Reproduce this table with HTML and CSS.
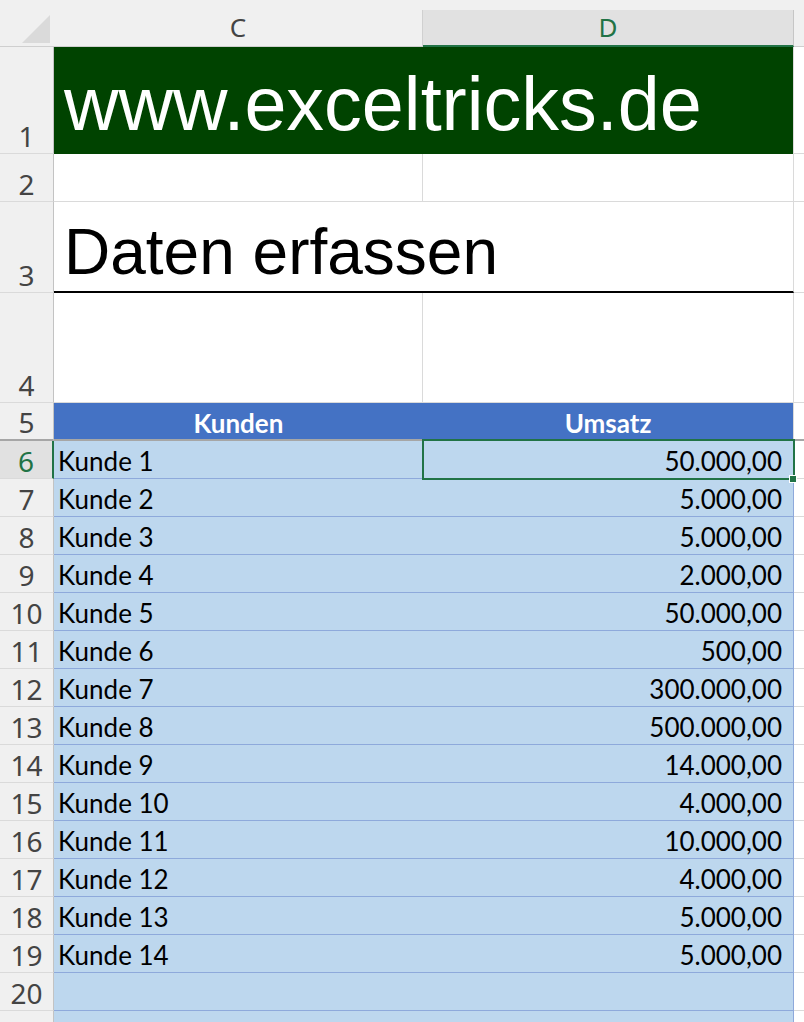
FILE: index.html
```html
<!DOCTYPE html>
<html lang="de">
<head>
<meta charset="utf-8">
<title>exceltricks</title>
<link rel="stylesheet" href="styles.css">
</head>
<body>
<div class="sheet">
  <!-- column headers -->
  <div class="ch corner"><svg class="tri" width="30" height="30" viewBox="0 0 30 30"><polygon points="1,29 29,29 29,1" fill="#dadada"/></svg></div>
  <div class="ch">C</div>
  <div class="ch sel">D</div>
  <div class="ch last"></div>

  <!-- row 1 -->
  <div class="rh">1</div>
  <div class="banner">www.exceltricks.de</div>
  <div class="e"></div>

  <!-- row 2 -->
  <div class="rh">2</div>
  <div class="w"></div>
  <div class="w"></div>
  <div class="e"></div>

  <!-- row 3 -->
  <div class="rh">3</div>
  <div class="title">Daten erfassen</div>
  <div class="e"></div>

  <!-- row 4 -->
  <div class="rh">4</div>
  <div class="w"></div>
  <div class="w"></div>
  <div class="e"></div>

  <!-- row 5 -->
  <div class="rh frz">5</div>
  <div class="th frz">Kunden</div>
  <div class="th thd frz">Umsatz</div>
  <div class="e frz"></div>

  <div class="rh rsel">6</div><div class="c">Kunde 1</div><div class="d active">50.000,00</div><div class="e"></div>
  <div class="rh">7</div><div class="c">Kunde 2</div><div class="d">5.000,00</div><div class="e"></div>
  <div class="rh">8</div><div class="c">Kunde 3</div><div class="d">5.000,00</div><div class="e"></div>
  <div class="rh">9</div><div class="c">Kunde 4</div><div class="d">2.000,00</div><div class="e"></div>
  <div class="rh">10</div><div class="c">Kunde 5</div><div class="d">50.000,00</div><div class="e"></div>
  <div class="rh">11</div><div class="c">Kunde 6</div><div class="d">500,00</div><div class="e"></div>
  <div class="rh">12</div><div class="c">Kunde 7</div><div class="d">300.000,00</div><div class="e"></div>
  <div class="rh">13</div><div class="c">Kunde 8</div><div class="d">500.000,00</div><div class="e"></div>
  <div class="rh">14</div><div class="c">Kunde 9</div><div class="d">14.000,00</div><div class="e"></div>
  <div class="rh">15</div><div class="c">Kunde 10</div><div class="d">4.000,00</div><div class="e"></div>
  <div class="rh">16</div><div class="c">Kunde 11</div><div class="d">10.000,00</div><div class="e"></div>
  <div class="rh">17</div><div class="c">Kunde 12</div><div class="d">4.000,00</div><div class="e"></div>
  <div class="rh">18</div><div class="c">Kunde 13</div><div class="d">5.000,00</div><div class="e"></div>
  <div class="rh">19</div><div class="c">Kunde 14</div><div class="d">5.000,00</div><div class="e"></div>
  <div class="rh">20</div><div class="c"></div><div class="d"></div><div class="e"></div>
  <div class="rh">21</div><div class="c"></div><div class="d"></div><div class="e"></div>
</div>
</body>
</html>
```

FILE: styles.css
```css
html, body {
  margin: 0;
  padding: 0;
  width: 804px;
  height: 1022px;
  overflow: hidden;
  background: #ffffff;
}

.sheet {
  display: grid;
  grid-template-columns: 54px 369px 371px 10px;
  grid-template-rows: 47px 107px 48px 91px 110px 38px repeat(16, 38px);
  background: #f0f0f0;
}

.sheet > div {
  box-sizing: border-box;
  min-width: 0;
  overflow: visible;
  white-space: nowrap;
}

/* column header */
.ch {
  margin-top: 10px;
  background: #f0f0f0;
  border-right: 1px solid #d0d0d0;
  border-bottom: 1px solid #cfcfcf;
  display: flex;
  align-items: center;
  justify-content: center;
  font-family: "Noto Sans", "Open Sans", sans-serif;
  font-size: 26px;
  line-height: 26px;
  color: #444444;
  padding-bottom: 2px;
}
.corner {
  margin-top: 0;
  border-right: none;
  justify-content: flex-end;
  align-items: flex-end;
  padding: 0 3px 2px 0;
}
.tri { display: block; }
.ch.sel {
  background: #e1e1e1;
  color: #217346;
  border-bottom: 2px solid #217346;
  border-right-color: #c6c6c6;
}
.ch.last { border-right: none; }

/* row header */
.rh {
  background: #f0f0f0;
  border-right: 1px solid #c3c3c3;
  border-bottom: 1px solid #dadada;
  display: flex;
  align-items: flex-end;
  justify-content: center;
  font-family: "Noto Sans", "Open Sans", sans-serif;
  font-size: 28px;
  line-height: 28px;
  color: #444444;
  padding-bottom: 3px;
}
.rh.rsel {
  background: #e1e1e1;
  color: #217346;
  border-right: 2px solid #217346;
}

/* plain cells */
.w {
  background: #ffffff;
  border-right: 1px solid #dadada;
  border-bottom: 1px solid #dadada;
}
.e {
  background: #ffffff;
  border-bottom: 1px solid #dadada;
}

.banner {
  grid-column: span 2;
  background: #004300;
  color: #ffffff;
  font-family: "Liberation Sans", Arial, sans-serif;
  font-size: 75.5px;
  line-height: 75px;
  display: flex;
  align-items: flex-end;
  padding: 0 0 12px 10px;
  border-right: 1px solid #dadada;
}

.title {
  grid-column: span 2;
  background: #ffffff;
  color: #000000;
  font-family: "Liberation Sans", Arial, sans-serif;
  font-size: 64px;
  line-height: 64px;
  display: flex;
  align-items: flex-end;
  padding: 0 0 7px 10px;
  border-bottom: 2px solid #000000;
  border-right: 1px solid #dadada;
}

/* table header */
.th {
  background: #4472c4;
  color: #ffffff;
  font-family: Lato, "Open Sans", sans-serif;
  font-weight: 700;
  font-size: 26px;
  line-height: 26px;
  display: flex;
  align-items: flex-end;
  justify-content: center;
  padding-bottom: 3px;
}
.th.thd { border-right: 1px solid #dadada; }

.frz { border-bottom: 2px solid #a6a6a6 !important; }

/* data cells */
.c, .d {
  background: #bdd7ee;
  border-bottom: 1px solid #8ea9db;
  font-family: Lato, "Open Sans", sans-serif;
  font-size: 26px;
  line-height: 26px;
  color: #000000;
  display: flex;
  align-items: flex-end;
  padding-bottom: 4px;
}
.c { padding-left: 4px; }
.d {
  justify-content: flex-end;
  padding-right: 11px;
  border-right: 1px solid #8ea9db;
}

.active { position: relative; }
.active::after {
  content: "";
  position: absolute;
  top: -2px;
  left: -1px;
  right: -2px;
  bottom: -2px;
  border: 2px solid #217346;
  z-index: 2;
}
.active::before {
  content: "";
  position: absolute;
  width: 6px;
  height: 6px;
  right: -4px;
  bottom: -5px;
  background: #217346;
  border: 1px solid #ffffff;
  z-index: 3;
}
```
